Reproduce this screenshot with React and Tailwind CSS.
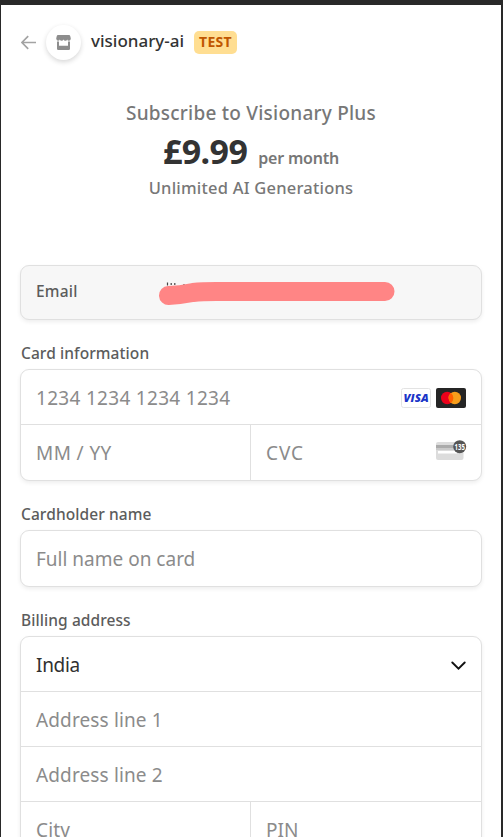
const box =
  "rounded-[9px] border border-[#e0e0e0] bg-white shadow-[0_2px_4px_rgba(0,0,0,0.07)]";
const label = "ml-[1px] h-6 text-[15.5px] leading-6 font-medium tracking-[0.08px] text-[#5c5c5c] whitespace-nowrap";
const field = "flex items-center pl-[15px] text-[19px] leading-6 text-[#8b8b8b] whitespace-nowrap";

function Header() {
  return (
    <header className="flex h-[38px] items-center">
      <svg className="ml-[1px] h-4 w-4 shrink-0" viewBox="0 0 16 16" fill="none" stroke="#a3a3a3" strokeWidth="1.7">
        <path d="M15 8.500H1M7.200 2.200 0.900 8.500 7.200 14.800" />
      </svg>
      <div className="mt-[1px] ml-[9px] flex h-[35px] w-[35px] shrink-0 items-center justify-center rounded-full bg-white shadow-[0_2px_5px_rgba(0,0,0,0.16)]">
        <svg className="mr-[1px] h-[15px] w-[15px]" viewBox="0 0 15 15" fill="#8d8d8d">
          <path d="M2 0h11q1 0 1.200 1l.6 2.600q0 2.100-1.700 2.100t-1.900-1.300Q10.900 5.700 9.400 5.700T7.500 4.400Q7 5.700 5.600 5.700T3.800 4.400Q3.400 5.700 1.900 5.700T.2 3.600L.8 1Q1 0 2 0Z" />
          <path d="M1 6.600h2v4.200h9V6.600h2v7.100q0 1.300-1.300 1.300H2.300Q1 15 1 13.700Z" />
        </svg>
      </div>
      <span className="mb-[2px] ml-[10px] w-[93px] text-[17px] leading-6 font-medium whitespace-nowrap text-[#333333]">
        visionary-ai
      </span>
      <span className="ml-[10px] flex h-[23px] w-[43px] items-center justify-center rounded-[5px] bg-[#ffde92] pb-[1px] text-[14px] font-bold tracking-[0.3px] text-[#c05600]">
        TEST
      </span>
    </header>
  );
}

function Summary() {
  return (
    <section className="mt-[37px] flex h-[104px] flex-col items-center whitespace-nowrap text-[#777777]">
      <h1 className="h-[30px] text-[19px] leading-[30px] font-medium tracking-[0.23px]">Subscribe to Visionary Plus</h1>
      <div className="flex h-[46px] items-baseline leading-[46px]">
        <span className="text-[34px] font-bold tracking-[-0.6px] text-[#333333]">£9.99</span>
        <span className="ml-[11px] text-[16px] font-semibold tracking-[-0.2px]">per month</span>
      </div>
      <p className="h-7 text-[16.5px] leading-7 font-medium tracking-[0.22px]">Unlimited AI Generations</p>
    </section>
  );
}

function Cards() {
  return (
    <div className="mt-[2px] mr-[15px] ml-auto flex gap-[5px]">
      <svg className="h-5 w-[30px]" viewBox="0 0 30 20">
        <rect x=".5" y=".5" width="29" height="19" rx="2" fill="#fff" stroke="#e3e3e3" />
        <text x="2.600" y="14" textLength="25" lengthAdjust="spacingAndGlyphs" fontFamily="Open Sans, sans-serif" fontSize="11" fontWeight="800" fontStyle="italic" fill="#1a34c8">VISA</text>
      </svg>
      <svg className="h-5 w-[30px]" viewBox="0 0 30 20">
        <rect width="30" height="20" rx="2" fill="#252525" />
        <circle cx="11.200" cy="10" r="6.200" fill="#eb001b" />
        <circle cx="18.800" cy="10" r="6.200" fill="#f79e1b" />
        <path d="M15 5.100a6.200 6.200 0 0 1 0 9.800a6.200 6.200 0 0 1 0-9.800Z" fill="#ff5f00" />
      </svg>
    </div>
  );
}

function CvcIcon() {
  return (
    <svg className="mr-[15px] mb-[5px] ml-auto h-5 w-[30px] overflow-visible" viewBox="0 0 30 20">
      <rect y="2" width="27.500" height="18" rx="2" fill="#dcdcdc" />
      <rect y="5" width="27.500" height="3" fill="#ababab" />
      <rect y="8" width="27.500" height="2" fill="#c9c9c9" />
      <rect x="2" y="11" width="19" height="2.500" fill="#fff" />
      <circle cx="23.700" cy="6.700" r="6.500" fill="#555" />
      <text x="18.600" y="9.600" textLength="10.400" lengthAdjust="spacingAndGlyphs" fontFamily="Open Sans, sans-serif" fontSize="8" fontWeight="700" fill="#fff">135</text>
    </svg>
  );
}

export default function App() {
  return (
    <div className="h-[837px] w-[503px] overflow-hidden border-t-[5px] border-r-2 border-l border-[#292929] bg-white font-['Noto_Sans',sans-serif]">
      <main className="mx-[19px] w-[462px] pt-[18px]">
        <Header />
        <Summary />

        <div className={`${box} mt-[63px] flex h-[55px] items-center bg-[#f7f7f7]!`}>
          <span className="mb-[2px] ml-[15px] w-[122px] text-[15.5px] font-medium tracking-[0.2px] text-[#5c5c5c]">Email</span>
          <svg className="h-[27px] w-[240px]" viewBox="0 0 240 27">
            <path d="M9.500 3.500v3M13.200 4v2M16.800 4v2M26 5v2" stroke="#444" strokeWidth="1.200" />
            <path d="M10.500 16.500Q22 16 35 13.500Q44 12.500 58 12.500H227" fill="none" stroke="#ff8585" strokeWidth="19" strokeLinecap="round" strokeLinejoin="round" />
          </svg>
        </div>

        <div className={`${label} mt-[21px]`}>Card information</div>
        <div className={`${box} mt-[4px] h-[112px]`}>
          <div className={`${field} h-[55px] border-b border-[#e0e0e0]`}>
            <span className="mt-[2px] tracking-[0.3px]">1234 1234 1234 1234</span>
            <Cards />
          </div>
          <div className="grid h-[55px] grid-cols-[230px_230px]">
            <div className={`${field} border-r border-[#e0e0e0] tracking-[0.4px]`}>MM / YY</div>
            <div className={field}>
              <span className="tracking-[0.9px]">CVC</span>
              <CvcIcon />
            </div>
          </div>
        </div>

        <div className={`${label} mt-[21px]`}>Cardholder name</div>
        <div className={`${box} ${field} mt-[4px] h-[57px]`}>Full name on card</div>

        <div className={`${label} mt-[21px]`}>Billing address</div>
        <div className={`${box} mt-[4px] h-[260px]`}>
          <div className={`${field} h-[55px] border-b border-[#e0e0e0] pt-[2px]`}>
            <span className="tracking-[-0.3px] text-[#303030]">India</span>
            <svg className="mt-[2px] mr-[15px] ml-auto h-[10px] w-[15px]" viewBox="0 0 15 10" fill="none" stroke="#111" strokeWidth="1.900">
              <path d="M1.300 1.500 7.500 7.600 13.700 1.500" strokeLinecap="round" />
            </svg>
          </div>
          <div className={`${field} h-[55px] border-b border-[#e0e0e0] pt-[2px] tracking-[0.13px]`}>Address line 1</div>
          <div className={`${field} h-[55px] border-b border-[#e0e0e0] pt-[2px] tracking-[0.13px]`}>Address line 2</div>
          <div className="grid h-[55px] grid-cols-[230px_230px]">
            <div className={`${field} border-r border-[#e0e0e0] tracking-[0.2px]`}>City</div>
            <div className={field}>PIN</div>
          </div>
        </div>
      </main>
    </div>
  );
}
